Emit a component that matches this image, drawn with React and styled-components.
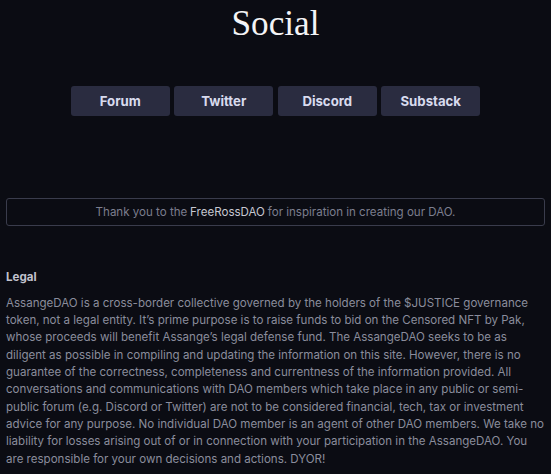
import React from "react";
import styled, { createGlobalStyle } from "styled-components";

const Global = createGlobalStyle`
  html, body {
    margin: 0;
    padding: 0;
    background: #0b0c13;
  }
  body {
    font-family: Inter, "Noto Sans", sans-serif;
    -webkit-font-smoothing: antialiased;
  }
`;

const Page = styled.div`
  padding: 0 6px;
  display: flex;
  flex-direction: column;
`;

const Title = styled.h1`
  margin: 4px 0 0;
  font-family: "Liberation Serif", "Times New Roman", serif;
  font-weight: 400;
  font-size: 35.2px;
  line-height: 40px;
  color: #f4f4f6;
  text-align: center;
`;

const ButtonRow = styled.div`
  display: flex;
  justify-content: center;
  gap: 4.5px;
  margin-top: 42px;
`;

const SocialButton = styled.a`
  width: 99px;
  height: 30px;
  display: flex;
  align-items: center;
  justify-content: center;
  background: #2a2c40;
  border-radius: 3px;
  color: #d8dbee;
  font-family: Inter, sans-serif;
  font-weight: 700;
  font-size: 13.2px;
  text-decoration: none;
`;

const ThanksBox = styled.div`
  margin-top: 82px;
  height: 27.5px;
  box-sizing: border-box;
  border: 1px solid #3a3c4c;
  border-radius: 3px;
  display: flex;
  align-items: center;
  justify-content: center;
  font-size: 11.56px;
  color: #7c7e8e;
`;

const Highlight = styled.span`
  color: #c6c7d1;
  margin: 0 0.25em;
`;

const LegalTitle = styled.h3`
  margin: 43px 0 0;
  font-size: 11.56px;
  font-weight: 700;
  line-height: 16px;
  color: #c2c3ce;
`;

const LegalText = styled.p`
  margin: 10px -1px 0 0;
  font-size: 11.56px;
  line-height: 17.35px;
  color: #8a8c9c;
`;

const links = ["Forum", "Twitter", "Discord", "Substack"];

export default function App() {
  return (
    <>
      <Global />
      <Page>
        <Title>Social</Title>
        <ButtonRow>
          {links.map((l) => (
            <SocialButton key={l} href="#">
              {l}
            </SocialButton>
          ))}
        </ButtonRow>
        <ThanksBox>
          Thank you to the<Highlight>FreeRossDAO</Highlight>for inspiration in creating our DAO.
        </ThanksBox>
        <LegalTitle>Legal</LegalTitle>
        <LegalText>
          AssangeDAO is a cross-border collective governed by the holders of the $JUSTICE governance
          token, not a legal entity. It’s prime purpose is to raise funds to bid on the Censored NFT by
          Pak, whose proceeds will benefit Assange’s legal defense fund. The AssangeDAO seeks to be as
          diligent as possible in compiling and updating the information on this site. However, there is
          no guarantee of the correctness, completeness and currentness of the information provided. All
          conversations and communications with DAO members which take place in any public or semi-public
          forum (e.g. Discord or Twitter) are not to be considered financial, tech, tax or investment
          advice for any purpose. No individual DAO member is an agent of other DAO members. We take no
          liability for losses arising out of or in connection with your participation in the
          AssangeDAO. You are responsible for your own decisions and actions. DYOR!
        </LegalText>
      </Page>
    </>
  );
}
